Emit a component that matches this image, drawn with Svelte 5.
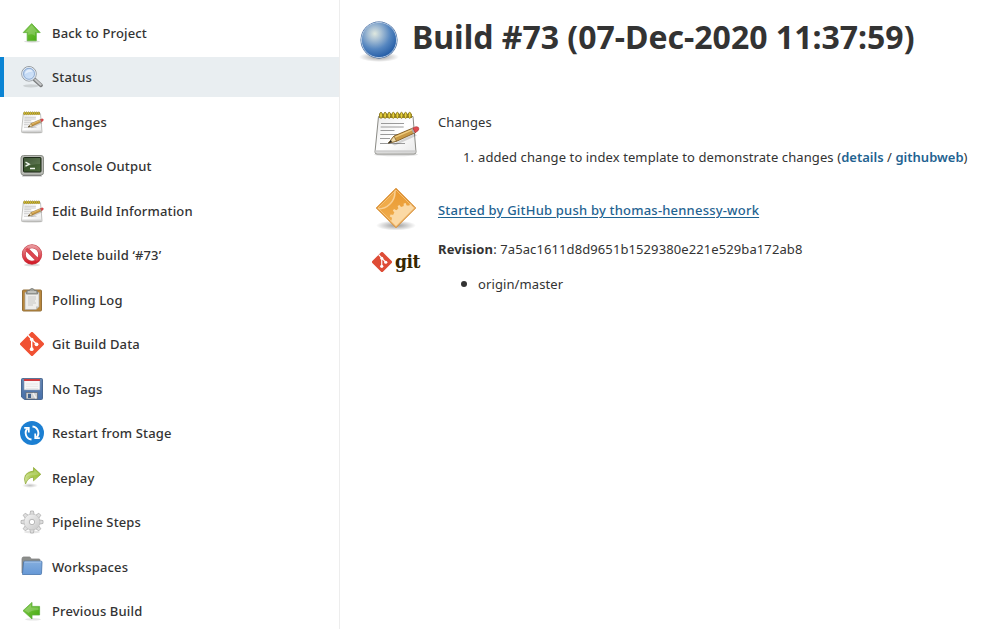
<script>
  const tasks = [
    { icon: 'up', label: 'Back to Project' },
    { icon: 'search', label: 'Status', active: true },
    { icon: 'notepad', label: 'Changes' },
    { icon: 'terminal', label: 'Console Output' },
    { icon: 'notepad', label: 'Edit Build Information' },
    { icon: 'delete', label: 'Delete build ‘#73’' },
    { icon: 'clipboard', label: 'Polling Log' },
    { icon: 'git', label: 'Git Build Data' },
    { icon: 'save', label: 'No Tags' },
    { icon: 'restart', label: 'Restart from Stage' },
    { icon: 'redo', label: 'Replay' },
    { icon: 'gear', label: 'Pipeline Steps' },
    { icon: 'folder', label: 'Workspaces' },
    { icon: 'previous', label: 'Previous Build' }
  ];
  const teeth = [0, 45, 90, 135, 180, 225, 270, 315];
  const rings = [0, 1, 2, 3, 4, 5, 6, 7];
  const cogs = [-70, -50, -30, -10, 10, 30, 50, 70, 90, 110];
</script>

{#snippet notepad(size)}
  <svg width={size} height={size} viewBox="0 0 48 48">
    <ellipse cx="24" cy="45.500" rx="22" ry="1.800" fill="#000" opacity=".12" />
    <path d="M6.500 7.500h34.500l3 35.500q0 2-2 2h-37q-2 0-2-2z" fill="url(#paper)" stroke="#8a8a85" />
    <path d="M3.500 41.200h40v2.600h-40z" fill="#cfcfcf" />
    <path d="M9 14.500h23M8.700 18h23M8.500 21.500h14M8.300 25.500h18M8 29.500h10M8 34.500h25" stroke="#9a9a9a" stroke-width="1" />
    <path d="M7 5h33v4H7z" fill="#a18c22" />
    {#each rings as r}
      <ellipse cx={9 + r * 4.100} cy="6.300" rx="1.500" ry="3" fill="#e8d23c" stroke="#837220" stroke-width=".9" />
    {/each}
    <path d="M20 35.500l23-11 2 2-22 10z" fill="#000" opacity=".15" />
    <path d="M16.500 34l5.500-7 19-8 2.500 4.600-19 8.700z" fill="#c99a45" stroke="#704a12" stroke-width=".8" />
    <path d="M22.500 28.300l18-7.700" stroke="#f0cd80" stroke-width="1.400" />
    <path d="M16.500 34l5.500-7 2.500 5.300z" fill="#efd9a8" stroke="#6b501f" stroke-width=".6" />
    <path d="M16 34.500l3-3.400.9 2z" fill="#222" />
    <path d="M39 19.800l2.300 4.800 1.900-.9-2.300-4.800z" fill="#aaa" />
    <path d="M40.900 18.900l3-1.200q3-.3 3 2.200 0 1.800-3.700 3.800z" fill="#e04a4f" stroke="#a33" stroke-width=".6" />
  </svg>
{/snippet}

{#snippet gitMark(size, color)}
  <svg width={size} height={size} viewBox="0 0 24 24">
    <path d="M10.900.4q1.100-1.100 2.200 0l10.500 10.500q1.100 1.100 0 2.200l-10.500 10.500q-1.100 1.100-2.200 0l-10.500-10.500q-1.100-1.100 0-2.200z" fill={color} />
    <path d="M8 3.200l3.700 4v9.700M12.300 8l4 4" fill="none" stroke="#fff" stroke-width="1.400" />
    <circle cx="11.700" cy="7.500" r="1.800" fill="#fff" />
    <circle cx="11.700" cy="17.200" r="1.900" fill="#fff" />
    <circle cx="16.500" cy="12.300" r="1.900" fill="#fff" />
  </svg>
{/snippet}

{#snippet taskIcon(name)}
  {#if name === 'notepad'}
    {@render notepad(24)}
  {:else if name === 'git'}
    {@render gitMark(24, '#f05133')}
  {:else}
    <svg width="24" height="24" viewBox="0 0 24 24">
      {#if name === 'up'}
        <ellipse cx="12" cy="20.500" rx="8" ry="1.200" fill="#000" opacity=".13" />
        <path d="M11.700 2.600l8.500 9h-3.900v8.200H7.200v-8.200H3.200z" fill="url(#green)" stroke="#5fae3c" stroke-width=".8" />
        <path d="M11.700 4l6.300 7h-2.800v4q-3-3-7-1v-3H5.400z" fill="#fff" opacity=".2" />
      {:else if name === 'search'}
        <ellipse cx="11" cy="20.800" rx="8" ry="1.600" fill="#000" opacity=".12" />
        <path d="M14.500 14.500l6.500 5.800" stroke="#7a7c7d" stroke-width="3.800" stroke-linecap="round" />
        <path d="M15.300 14.700l5.500 5" stroke="#c6c8c9" stroke-width="2" stroke-linecap="round" />
        <circle cx="9" cy="8.800" r="7.300" fill="url(#lens)" stroke="#999da1" stroke-width="1" />
        <circle cx="9" cy="8.800" r="6.300" fill="none" stroke="#e8edf2" />
        <circle cx="9" cy="8.800" r="5.500" fill="none" stroke="#7d9dc8" stroke-width=".8" />
        <path d="M5 9q0-4.500 5-4.500 3 1 2.500 2-4 0-7.500 2.500z" fill="#fff" opacity=".55" />
      {:else if name === 'terminal'}
        <rect x="1" y="1.500" width="22.500" height="19.500" rx="2.500" fill="#b9bbb5" stroke="#8b8e87" />
        <path d="M3 21.300h18l1 1H2z" fill="#666" />
        <rect x="3.500" y="3.500" width="17.500" height="14.500" rx=".8" fill="url(#screen)" stroke="#1c2918" />
        <path d="M4 4h16v6q-8 0-16 4z" fill="#fff" opacity=".13" />
        <path d="M5.500 8.200l3.800 2-3.800 2M10 14.500h5" fill="none" stroke="#f1f8ee" stroke-width="1.300" />
      {:else if name === 'delete'}
        <ellipse cx="12" cy="22" rx="8" ry="1.300" fill="#000" opacity=".13" />
        <circle cx="12" cy="11.500" r="8.200" fill="#fff" fill-opacity=".6" stroke="#c4444c" stroke-width="3.900" />
        <path d="M6.200 5.700l11.600 11.600" stroke="#c4343e" stroke-width="3.800" />
        <circle cx="12" cy="11.500" r="8.200" fill="none" stroke="url(#red)" stroke-width="3" />
        <path d="M6.200 5.700l11.600 11.600" stroke="#dd4650" stroke-width="2.900" />
      {:else if name === 'clipboard'}
        <rect x="2.500" y="2" width="19" height="21" rx="1" fill="#b8873c" stroke="#94703a" />
        <path d="M5 4.500h14v14l-3 3H5z" fill="#eeeeec" stroke="#aaa" stroke-width=".7" />
        <path d="M19 18.500h-3v3z" fill="#c4c4c2" />
        <path d="M8 9h8M8 11h8M8 13h7M8 15h8M8 17h5" stroke="#b8b8b8" stroke-width=".7" />
        <path d="M7 2.500h2.500q.5-2 2.500-2t2.500 2H17l.7 3.500H6.300z" fill="#a1a39e" stroke="#777973" stroke-width=".8" />
        <path d="M8 4h8" stroke="#dedfdb" />
      {:else if name === 'save'}
        <path d="M2.500 1.500h19q1 0 1 1v19q0 1-1 1h-17l-3-2.500V2.500q0-1 1-1z" fill="url(#disk)" stroke="#4a6890" />
        <rect x="4" y="2" width="16" height="11" fill="#f7f7f7" stroke="#8697ad" stroke-width=".6" />
        <path d="M4 2h16v2H4z" fill="#ce3b40" />
        <path d="M6 7h12M6 9.300h12M6 11.500h12" stroke="#ddd" stroke-width=".6" />
        <path d="M6 15.500h11.500V22H6z" fill="#cfd2d4" stroke="#5d6570" stroke-width=".7" />
        <path d="M8 16.800h3V21H8z" fill="#42638f" />
        <path d="M13 16l3 5.500" stroke="#fff" stroke-width="1.500" opacity=".7" />
      {:else if name === 'restart'}
        <circle cx="12" cy="12" r="12" fill="#1c7fd2" />
        <path d="M7.500 7.500A6.500 6.500 0 0 0 11.500 18.500M16.500 16.500A6.500 6.500 0 0 0 12.500 5.500" fill="none" stroke="#fff" stroke-width="1.900" />
        <path d="M4.200 6.800h4.600v4.800M19.800 17.200h-4.600v-4.800" fill="none" stroke="#fff" stroke-width="1.700" />
      {:else if name === 'redo'}
        <ellipse cx="10" cy="19.500" rx="8" ry="2.400" fill="url(#shade)" opacity=".6" />
        <path d="M13.500 1.500l7.300 6.800-7.300 6.500v-3.600Q8 11 5.500 18 1.500 6.500 13.500 5z" fill="url(#lime)" stroke="#93ab3e" stroke-width=".8" />
        <path d="M14.300 3.500l5 4.800-5 1Q8 8.500 5 12.500 6 6.700 14.300 6.200z" fill="#fff" opacity=".2" />
      {:else if name === 'gear'}
        <ellipse cx="12" cy="22" rx="8" ry="1.500" fill="#000" opacity=".1" />
        {#each teeth as angle}
          <path d="M9.800 5l.8-4h2.800l.8 4z" transform={`rotate(${angle} 12 12)`} fill="#dedede" stroke="#b0b0b0" stroke-width=".8" />
        {/each}
        <circle cx="12" cy="12" r="8" fill="url(#steel)" stroke="#bbb" stroke-width=".6" />
        <circle cx="12" cy="12" r="3.600" fill="#ddd" />
        <circle cx="12" cy="12" r="2.700" fill="#fff" stroke="#a8a8a8" stroke-width=".8" />
      {:else if name === 'folder'}
        <path d="M2 4q0-2 1.500-2h6q1 0 1.500 2h8q1 0 1 1v13H2z" fill="#8c8e8b" stroke="#808280" stroke-width=".8" />
        <path d="M2.500 18.500L3.600 7q.2-.8 1-.8h16.600q.9 0 .8 1l-.5 11.300q0 1-1 1H2.500z" fill="url(#folderBlue)" stroke="#4773ab" stroke-width=".8" />
        <path d="M4.500 7h16.500" stroke="#b6d1f0" stroke-width=".8" />
      {:else if name === 'previous'}
        <ellipse cx="13" cy="20.300" rx="8" ry="1.200" fill="#000" opacity=".1" />
        <path d="M3 11.700l9-8.300v4h7.600v8.600h-7.600v4z" fill="url(#green)" stroke="#5fae3c" stroke-width=".8" />
        <path d="M4.500 11.200l6.500-5.800v3h7.500v2.500q-7 0-10 3z" fill="#fff" opacity=".2" />
      {/if}
    </svg>
  {/if}
{/snippet}

<svg class="defs" width="0" height="0" aria-hidden="true">
  <defs>
    <linearGradient id="paper" x1="0" y1="0" x2="1" y2="1"><stop offset="0" stop-color="#ececec" /><stop offset=".5" stop-color="#fff" /><stop offset="1" stop-color="#e8e8e8" /></linearGradient>
    <linearGradient id="green" x1="0" y1="0" x2="1" y2="1"><stop offset="0" stop-color="#86cc4d" /><stop offset="1" stop-color="#42a80e" /></linearGradient>
    <linearGradient id="lens" x1="0" y1="0" x2="1" y2="1"><stop offset="0" stop-color="#b4d0f3" /><stop offset="1" stop-color="#d9e8f9" /></linearGradient>
    <linearGradient id="screen" x1="0" y1="0" x2="1" y2="1"><stop offset="0" stop-color="#233d19" /><stop offset="1" stop-color="#527041" /></linearGradient>
    <linearGradient id="red" x1="0" y1="0" x2="0" y2="1"><stop offset="0" stop-color="#e9959a" /><stop offset="1" stop-color="#d31c29" /></linearGradient>
    <linearGradient id="disk" x1="0" y1="0" x2="0" y2="1"><stop offset="0" stop-color="#6384b1" /><stop offset="1" stop-color="#4770aa" /></linearGradient>
    <linearGradient id="lime" x1="0" y1="1" x2="1" y2="0"><stop offset="0" stop-color="#dce9b0" /><stop offset=".5" stop-color="#a9c94b" /><stop offset="1" stop-color="#93b931" /></linearGradient>
    <linearGradient id="steel" x1="0" y1="0" x2="1" y2="1"><stop offset="0" stop-color="#f5f5f5" /><stop offset="1" stop-color="#c7c7c7" /></linearGradient>
    <linearGradient id="folderBlue" x1="0" y1="0" x2="0" y2="1"><stop offset="0" stop-color="#84aede" /><stop offset="1" stop-color="#6698d6" /></linearGradient>
    <radialGradient id="ball" cx=".38" cy=".32" r=".68"><stop offset="0" stop-color="#dfe8df" /><stop offset=".28" stop-color="#a7bfd4" /><stop offset=".65" stop-color="#5586c0" /><stop offset="1" stop-color="#2860a8" /></radialGradient>
    <radialGradient id="shade"><stop offset="0" stop-color="#000" stop-opacity=".4" /><stop offset="1" stop-color="#000" stop-opacity="0" /></radialGradient>
    <linearGradient id="amber" x1="0" y1="0" x2="0" y2="1"><stop offset="0" stop-color="#e9972d" /><stop offset="1" stop-color="#f1b154" /></linearGradient>
    <clipPath id="diamond"><path d="M24 3.500l19.500 19.500L24 42.500 4.500 23z" /></clipPath>
  </defs>
</svg>

<div class="page">
  <nav>
    {#each tasks as task}
      <a class="task" class:active={task.active} href="#top">
        <span class="icon">{@render taskIcon(task.icon)}</span>
        <span>{task.label}</span>
      </a>
    {/each}
  </nav>
  <main>
    <header>
      <svg width="44" height="48" viewBox="0 0 44 48">
        <ellipse cx="22" cy="39" rx="20" ry="5" fill="url(#shade)" />
        <circle cx="22" cy="22" r="18.500" fill="#24508c" />
        <circle cx="22" cy="22" r="17.600" fill="url(#ball)" stroke="#b8cce4" stroke-width="1" />
      </svg>
      <h1>Build #73 (07-Dec-2020 11:37:59)</h1>
    </header>

    <section class="changes">
      <div class="pic">{@render notepad(48)}</div>
      <div class="detail">
        <p>Changes</p>
        <div class="entry"><span class="marker">1.</span><span class="commit">added change to index template to demonstrate changes (<a href="#details">details</a> / <a href="#web">githubweb</a>)</span></div>
      </div>
    </section>

    <section class="cause">
      <div class="pic">
        <svg width="48" height="48" viewBox="0 0 48 48">
          <ellipse cx="24" cy="40.500" rx="20" ry="5" fill="url(#shade)" />
          <path d="M24 3L44 23 24 43 4 23z" fill="url(#amber)" />
          <g clip-path="url(#diamond)">
            <circle cx="6" cy="7" r="17" fill="#f0ab4a" stroke="#f9cf92" stroke-width="1.500" />
            <circle cx="36" cy="37" r="16.500" fill="#fbd9a5" />
            {#each cogs as angle}
              <path d="M34.300 21.500l.7-3.500h2l.7 3.500z" transform={`rotate(${angle - 60} 36 37)`} fill="#fbd9a5" />
            {/each}
          </g>
          <path d="M24 3.500l19.500 19.500L24 42.500 4.500 23z" fill="none" stroke="#cf8228" stroke-linejoin="round" />
          <path d="M24 5l18 18-18 18L6 23z" fill="none" stroke="#f8c881" stroke-width=".8" />
        </svg>
      </div>
      <a class="push" href="#cause">Started by GitHub push by thomas-hennessy-work</a>
    </section>

    <section class="revision">
      <div class="pic logo">{@render gitMark(20, '#de4c36')}<span>git</span></div>
      <div class="detail">
        <p class="hash"><b>Revision</b>: 7a5ac1611d8d9651b1529380e221e529ba172ab8</p>
        <div class="entry"><span class="marker"><i></i></span><span class="branch">origin/master</span></div>
      </div>
    </section>
  </main>
</div>

<style>
  :global(body) { margin: 0; background: #fff; }
  .defs { position: absolute; }
  .page {
    display: flex;
    width: 981px;
    height: 629px;
    overflow: hidden;
    color: #333;
    font: 13px/20px "Noto Sans", "Open Sans", sans-serif;
    letter-spacing: .1px;
  }
  nav {
    box-sizing: border-box;
    width: 340px;
    flex: none;
    padding-top: 12.980px;
    border-right: 1px solid #ededed;
  }
  .task {
    display: flex;
    align-items: center;
    box-sizing: border-box;
    height: 40px;
    margin-bottom: 4.470px;
    padding-left: 20px;
    gap: 8px;
    color: #333;
    font-weight: 500;
    letter-spacing: .15px;
    text-decoration: none;
    white-space: nowrap;
  }
  .active { padding-left: 16px; border-left: 4px solid #0b84d4; background: #e9eef1; }
  .icon, .icon :global(svg) { display: block; width: 24px; height: 24px; }
  main { flex: 1; padding: 18px 0 0 17px; white-space: nowrap; }
  header { display: flex; height: 48px; gap: 11px; }
  h1 { margin: 0; font-size: 32px; line-height: 38px; font-weight: 700; letter-spacing: 0; }
  section { display: flex; }
  .pic { width: 48px; margin-left: 15px; flex: none; }
  .pic :global(svg) { display: block; flex: none; }
  .detail, .push { margin-left: 18px; }
  p { margin: 0; }
  .changes { height: 76px; margin-top: 43px; }
  .changes .detail { padding-top: 3px; }
  .entry { display: flex; margin-top: 15px; }
  .marker { width: 36px; margin-right: 4px; text-align: right; }
  .marker i { display: block; width: 6px; height: 6px; margin: 7px 0 0 23px; border-radius: 50%; background: #333; }
  .commit a { color: #1f6391; font-weight: 600; letter-spacing: 0; text-decoration: none; }
  .cause { height: 54px; }
  .push { margin-top: 15px; color: #1f6391; font-weight: 500; letter-spacing: .2px; text-decoration: underline; text-underline-offset: 2px; }
  .logo { display: flex; align-items: center; height: 24px; margin: 11px 0 0 15px; gap: 3px; }
  .logo span { color: #362701; font: bold 19px/20px "DejaVu Serif Condensed", "DejaVu Serif", serif; font-stretch: condensed; letter-spacing: -.5px; margin-top: -3px; }
</style>
